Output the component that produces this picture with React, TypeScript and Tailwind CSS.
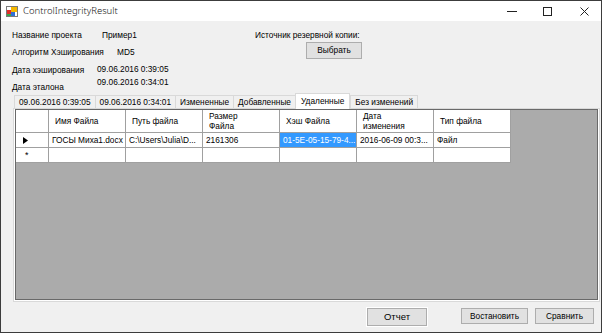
import React from "react";

const cols = ["Имя Файла", "Путь файла", "Размер\nФайла", "Хэш Файла", "Дата\nизменения", "Тип файла"];
const row = ["ГОСЫ Миха1.docx", "C:\\Users\\Julia\\D...", "2161306", "01-5E-05-15-79-4...", "2016-06-09 00:3...", "Файл"];
const tabs = ["09.06.2016 0:39:05", "09.06.2016 0:34:01", "Измененные", "Добавленные", "Удаленные", "Без изменений"];

const AppIcon = () => (
  <svg width="12" height="11" viewBox="0 0 12 11">
    <rect x="0.5" y="0.5" width="11" height="10" fill="#fff" stroke="#7a7a7a" />
    <rect x="5" y="1" width="6" height="5" fill="#f5b800" />
    <rect x="1" y="4" width="4" height="4" fill="#e0302a" />
    <rect x="5" y="6" width="4" height="4" fill="#2f6fd8" />
    <rect x="1" y="8" width="4" height="2" fill="#3aa84a" />
  </svg>
);

function TitleBar() {
  return (
    <div className="h-[20px] bg-white flex items-center pl-[5px] pr-[12px]">
      <AppIcon />
      <span className="ml-[5px] text-[9.5px] font-light text-[#111] font-['Noto_Sans',sans-serif]">
        ControlIntegrityResult
      </span>
      <svg className="ml-auto" width="10" height="10" viewBox="0 0 10 10">
        <line x1="0" y1="5.5" x2="10" y2="5.5" stroke="#222" strokeWidth="1" />
      </svg>
      <svg className="ml-[26px]" width="9" height="9" viewBox="0 0 9 9">
        <rect x="0.5" y="0.5" width="8" height="8" fill="none" stroke="#222" strokeWidth="1" />
      </svg>
      <svg className="ml-[28px]" width="9" height="9" viewBox="0 0 9 9">
        <path d="M0.5 0.5 L8.5 8.5 M8.5 0.5 L0.5 8.5" stroke="#222" strokeWidth="1" />
      </svg>
    </div>
  );
}

function WinButton({ label, className }: { label: string; className: string }) {
  return (
    <div
      className={
        "flex items-center justify-center bg-[#e1e1e1] border border-[#adadad] text-black " + className
      }
    >
      {label}
    </div>
  );
}

function Info() {
  return (
    <div className="h-[72px] flex pl-[11px]">
      <div className="w-[243px] flex flex-col">
        <div className="mt-[8px] h-[13px] flex items-center">
          <span className="w-[90px]">Название проекта</span>
          <span>Пример1</span>
        </div>
        <div className="mt-[5px] h-[13px] flex items-center">
          <span className="w-[105px]">Алгоритм Хэширования</span>
          <span>MD5</span>
        </div>
        <div className="mt-[4px] h-[13px] flex items-start">
          <span className="mt-[1px] w-[85px]">Дата хэширования</span>
          <span>09.06.2016 0:39:05</span>
        </div>
        <div className="h-[18px] flex items-start">
          <span className="mt-[5px] w-[85px]">Дата эталона</span>
          <span>09.06.2016 0:34:01</span>
        </div>
      </div>
      <div className="flex flex-col items-start">
        <div className="mt-[8px] h-[13px] flex items-center">Источник резервной копии:</div>
        <WinButton label="Выбрать" className="ml-[51px] w-[56px] h-[17px]" />
      </div>
    </div>
  );
}

function Tabs() {
  return (
    <div className="h-[15px] flex items-end pl-[13px]">
      {tabs.map((t, i) =>
        i === 4 ? (
          <div
            key={t}
            className="h-[16px] -mb-[1px] relative z-10 px-[5px] bg-white border border-b-0 border-[#d9d9d9] flex items-center"
          >
            {t}
          </div>
        ) : (
          <div
            key={t}
            className="h-[13px] px-[4px] bg-[#f0f0f0] border border-b-0 border-r-0 last:border-r border-[#d9d9d9] flex items-center"
          >
            {t}
          </div>
        )
      )}
    </div>
  );
}

function Grid() {
  const cell = "border-r border-b border-[#a0a0a0] bg-white";
  return (
    <div className="flex-1 bg-[#ababab] border border-[#696969]">
      <div className="grid grid-cols-[33px_repeat(6,77px)] grid-rows-[23px_15px_15px] w-max">
        <div className={cell} />
        {cols.map((c) => (
          <div key={c} className={cell + " pl-[6px] flex items-center whitespace-pre leading-[10px]"}>
            {c}
          </div>
        ))}
        <div className={cell + " flex items-center pl-[7px]"}>
          <svg width="5" height="7" viewBox="0 0 5 7">
            <path d="M0 0 L5 3.5 L0 7 Z" fill="#000" />
          </svg>
        </div>
        {row.map((v, i) => (
          <div
            key={v}
            className={
              i === 3
                ? "border-r border-b border-[#a0a0a0] bg-[#3399ff] text-white pl-[3px] flex items-center whitespace-nowrap overflow-hidden"
                : cell + " pl-[3px] flex items-center whitespace-nowrap overflow-hidden"
            }
          >
            {v}
          </div>
        ))}
        <div className={cell + " flex items-center pl-[9px] text-[9px] leading-none text-black"}>*</div>
        {row.map((v) => (
          <div key={"e" + v} className={cell} />
        ))}
      </div>
    </div>
  );
}

export default function App() {
  return (
    <div className="w-[604px] h-[334px] bg-white">
      <div className="w-[602px] h-[333px] border border-[#3c3c3c] flex flex-col bg-[#f0f0f0] text-[8.3px] text-black font-['Liberation_Sans',Arial,sans-serif]">
        <TitleBar />
        <div className="flex-1 flex flex-col">
          <Info />
          <Tabs />
          <div className="ml-[12px] w-[587px] h-[194px] border border-[#d9d9d9] bg-white flex flex-col px-[1px] pb-[1px]">
            <Grid />
          </div>
          <div className="mt-[5px] flex items-start pl-[365px]">
            <div className="border border-white">
              <WinButton label="Отчет" className="w-[60px] h-[18px] text-[9.5px]" />
            </div>
            <WinButton label="Востановить" className="ml-[33px] mt-[1px] w-[67px] h-[16px]" />
            <WinButton label="Сравнить" className="ml-[7px] mt-[1px] w-[59px] h-[16px]" />
          </div>
        </div>
      </div>
    </div>
  );
}
